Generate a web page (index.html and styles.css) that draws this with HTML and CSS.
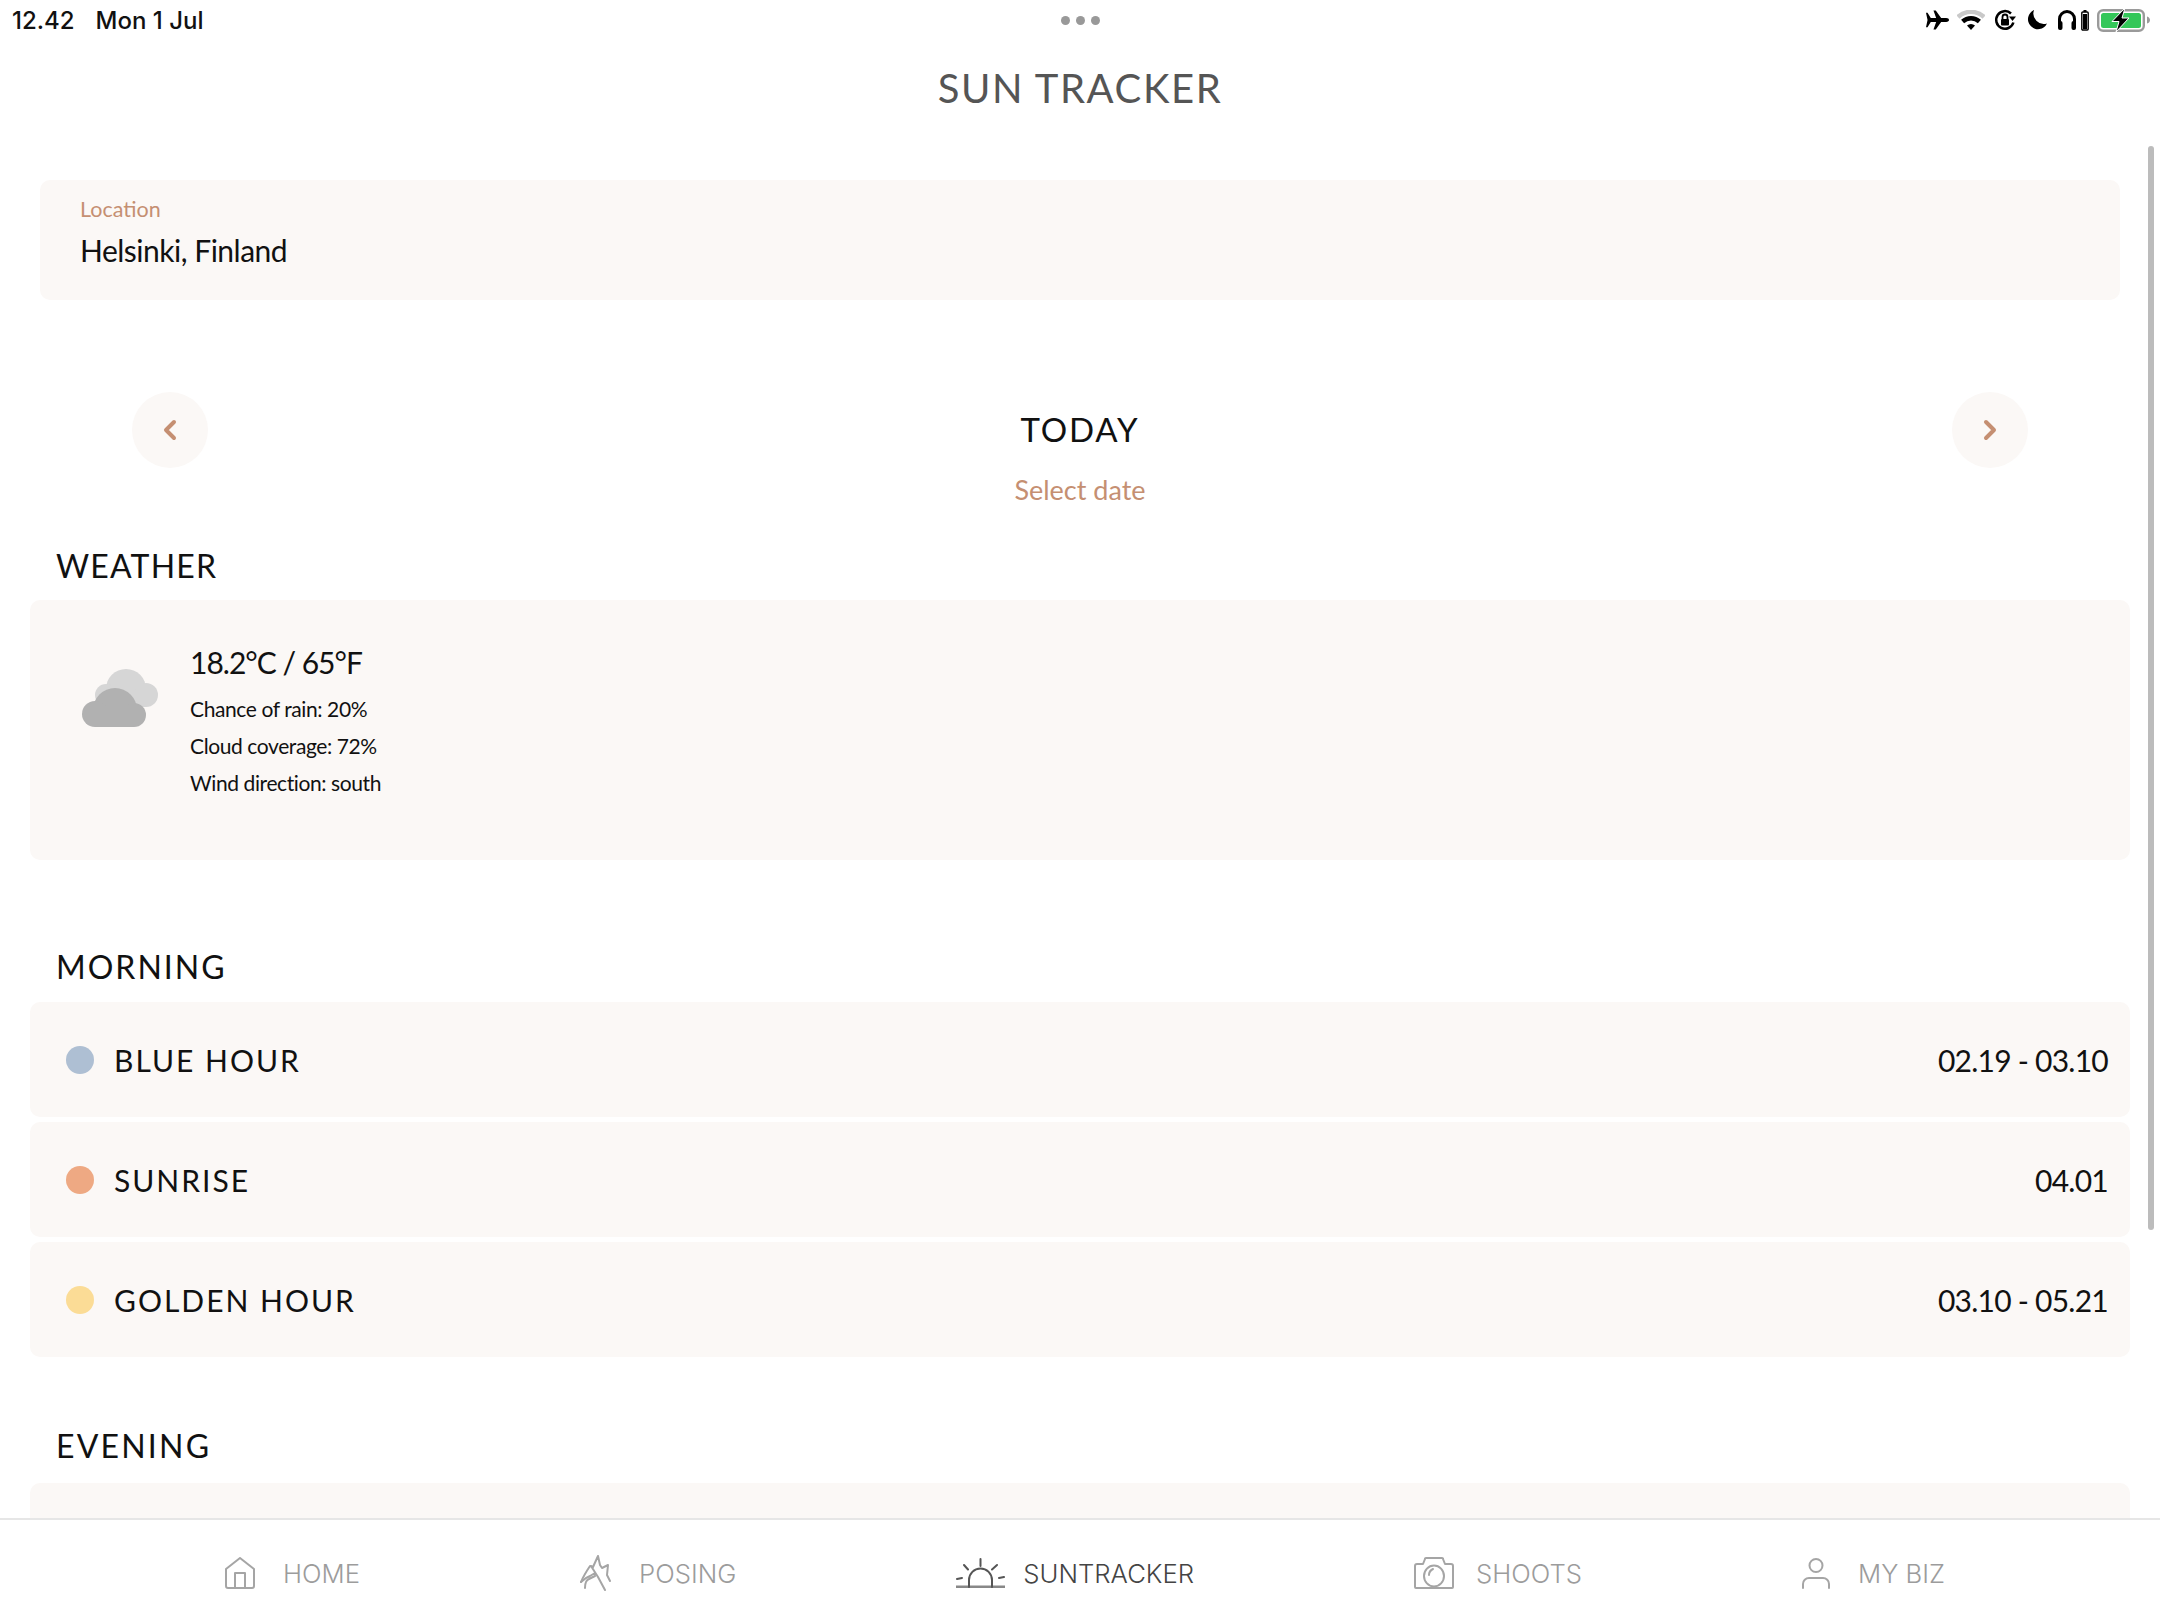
FILE: index.html
```html
<!DOCTYPE html>
<html lang="en">
<head>
<meta charset="utf-8">
<title>Sun Tracker</title>
<link rel="stylesheet" href="styles.css">
</head>
<body>
<div class="screen">
  <header class="status">
    <div class="status-time"><span>12.42</span><span>Mon 1 Jul</span></div>
    <div class="status-dots"><i></i><i></i><i></i></div>
    <div class="status-icons">
      <svg class="si-plane" viewBox="0 0 24 20"><path d="M0 2.500h1.600L5 8h5.600L7.800 0h2.400l5.600 8H21c2 0 3 1 3 2s-1 2-3 2h-5.200l-5.600 8H7.800l2.800-8H5l-3.400 5.500H0L1.600 10z"/></svg>
      <svg class="si-wifi" viewBox="0 0 28 20"><path d="M1 7a19 19 0 0 1 26 0" class="wifi-dim"/><path d="M5.600 11.500a12.500 12.500 0 0 1 16.800 0" class="wifi-on"/><path d="M14 20l-4-4.500a6 6 0 0 1 8 0z"/></svg>
      <svg class="si-lock" viewBox="0 0 22 22"><path d="M19.400 13.500A8.800 8.800 0 1 1 17 4.500" class="ring"/><path d="M15 7.500h7L18.500 12z"/><rect x="7" y="10" width="8" height="6.500" rx="1"/><path d="M8.500 10.500V8a2.500 2.500 0 0 1 5 0v2.500" class="shackle"/></svg>
      <svg class="si-moon" viewBox="0 0 20 20"><path d="M7 0a10 10 0 1 0 13 13.500A10.500 10.500 0 0 1 7 0z"/></svg>
      <svg class="si-phones" viewBox="0 0 18 20"><path d="M1.500 17V9a7.500 7.500 0 0 1 15 0v8" class="ring-thick"/><rect x="0" y="11" width="4.500" height="9" rx="2"/><rect x="13.500" y="11" width="4.500" height="9" rx="2"/></svg>
      <svg class="si-minibat" viewBox="0 0 8 21"><rect x="2.500" y="0" width="3" height="2"/><rect x="0.800" y="2" width="6.400" height="18" rx="1" class="minibat-frame"/><rect x="2" y="4" width="4" height="15"/></svg>
      <svg class="si-battery" viewBox="0 0 53 24"><rect x="1.200" y="2.200" width="45.600" height="20.600" rx="5" class="bat-frame"/><rect x="4" y="5" width="40" height="15" rx="2.500" class="bat-fill"/><path d="M50 8.500c2 .6 3 2 3 3.500s-1 3-3 3.500z" class="bat-tip"/><path d="M28 0L15 13.500h7L19 24l13-14h-7l3-10z" class="bat-bolt"/></svg>
    </div>
  </header>
  <h1 class="title">SUN TRACKER</h1>
  <main class="content">
    <section class="location card">
      <div class="location-label">Location</div>
      <div class="location-value">Helsinki, Finland</div>
    </section>
    <nav class="date-nav">
      <button class="round-btn" type="button"><svg viewBox="0 0 14 22"><path d="M11 3L3 11l8 8"/></svg></button>
      <div class="date-center">
        <div class="date-today">TODAY</div>
        <div class="date-select">Select date</div>
      </div>
      <button class="round-btn" type="button"><svg viewBox="0 0 14 22"><path d="M3 3l8 8-8 8"/></svg></button>
    </nav>
    <h2 class="section-title section-weather">WEATHER</h2>
    <section class="weather card">
      <svg class="cloud" viewBox="0 0 76 58">
        <g class="cloud-back"><circle cx="44" cy="20" r="20"/><circle cx="64" cy="26" r="12"/><circle cx="24" cy="26" r="11"/><rect x="24" y="22" width="40" height="16"/></g>
        <g class="cloud-front"><circle cx="33" cy="41" r="22"/><circle cx="13" cy="45" r="13"/><circle cx="52" cy="46" r="12"/><rect x="13" y="40" width="39" height="18"/></g>
      </svg>
      <div class="weather-text">
        <div class="weather-temp">18.2°C / 65°F</div>
        <div class="weather-line">Chance of rain: 20%</div>
        <div class="weather-line">Cloud coverage: 72%</div>
        <div class="weather-line">Wind direction: south</div>
      </div>
    </section>
    <h2 class="section-title section-morning">MORNING</h2>
    <section class="rows">
      <div class="row card"><span class="dot dot-blue"></span><span class="row-name">BLUE HOUR</span><span class="row-time">02.19 - 03.10</span></div>
      <div class="row card"><span class="dot dot-sun"></span><span class="row-name">SUNRISE</span><span class="row-time">04.01</span></div>
      <div class="row card"><span class="dot dot-gold"></span><span class="row-name">GOLDEN HOUR</span><span class="row-time">03.10 - 05.21</span></div>
    </section>
    <h2 class="section-title section-evening">EVENING</h2>
    <section class="rows"><div class="row card"></div></section>
  </main>
  <footer class="tabs">
    <a class="tab"><svg class="tab-icon ti-home" viewBox="0 0 30 32"><path d="M1 12L15 1l14 11v17a2 2 0 0 1-2 2H3a2 2 0 0 1-2-2z"/><path d="M10 31V16h10v15"/></svg>HOME</a>
    <a class="tab"><svg class="tab-icon ti-pose" viewBox="0 0 31 36"><path d="M1 27c2-5 5-10 9-16l3 1 5-11 2 9 2 3 6-3-1 10 3 6"/><path d="M25 35l-7-13-7-11M5 33c0-5 1-8 4-9l6-3M1 27c3-3 6-5 9-6l5-3"/></svg>POSING</a>
    <a class="tab tab-active"><svg class="tab-icon ti-sun" viewBox="0 0 49 30"><path d="M0 29h49" class="sun-base"/><path d="M13 29v-7a11.500 11.500 0 0 1 23 0v7"/><path d="M24.500 1v7M8 7l4 4.500M41 7l-5 4.500M1 21l5-1M43 20l5-1"/></svg>SUNTRACKER</a>
    <a class="tab tab-cam"><svg class="tab-icon ti-cam" viewBox="0 0 40 32"><path d="M1 9a2 2 0 0 1 2-2h6l2-5a1 1 0 0 1 1-1h16a1 1 0 0 1 1 1l2 5h6a2 2 0 0 1 2 2v21a1 1 0 0 1-1 1H2a1 1 0 0 1-1-1z"/><ellipse cx="20" cy="19" rx="10" ry="10.500"/><path d="M15 18c0-3 2-5 4-6"/></svg>SHOOTS</a>
    <a class="tab"><svg class="tab-icon ti-user" viewBox="0 0 28 31"><circle cx="14" cy="7.500" r="6.500"/><path d="M1 30v-4a6 6 0 0 1 6-6h14a6 6 0 0 1 6 6v4"/></svg>MY BIZ</a>
  </footer>
  <div class="scrollbar"></div>
</div>
</body>
</html>
```
FILE: styles.css
```css
* { box-sizing: border-box; }
html, body { margin: 0; padding: 0; }
body { background: #fff; font-family: "Lato", "Liberation Sans", sans-serif; color: #111; }
.screen { position: relative; width: 2160px; height: 1620px; display: flex; flex-direction: column; overflow: hidden; background: #fff; }

.status { height: 40px; flex: none; display: grid; grid-template-columns: 1fr auto 1fr; align-items: center; padding: 0 12px; }
.status-time { display: flex; gap: 21px; font-family: "Inter", sans-serif; font-size: 24px; font-weight: 500; color: #111; }
.status-dots { display: flex; gap: 6px; }
.status-dots i { display: block; width: 9px; height: 9px; border-radius: 50%; background: #999; }
.status-icons { display: flex; justify-content: flex-end; align-items: center; margin-right: -2px; }
.status-icons svg { display: block; fill: #000; flex: none; }
.si-plane { width: 23px; height: 20px; margin-right: 8px; }
.si-wifi { width: 28px; height: 20px; margin-right: 9px; }
.si-lock { width: 22px; height: 22px; margin-right: 11px; }
.si-moon { width: 20px; height: 20px; margin-right: 11px; }
.si-phones { width: 18px; height: 20px; margin-right: 5px; }
.si-minibat { width: 8px; height: 21px; margin-right: 8px; }
.si-battery { width: 53px; height: 24px; }
.wifi-dim, .wifi-on { fill: none; stroke-width: 4.5; }
.wifi-dim { stroke: #c9c9c9; }
.wifi-on { stroke: #000; }
.ring { fill: none; stroke: #000; stroke-width: 2.5; }
.shackle { fill: none; stroke: #000; stroke-width: 1.8; }
.ring-thick { fill: none; stroke: #000; stroke-width: 3; }
.minibat-frame { fill: none; stroke: #000; stroke-width: 1.4; }
.bat-frame { fill: none; stroke: #9a9a9a; stroke-width: 2.400; }
.bat-fill { fill: #34c759; }
.bat-tip { fill: #9a9a9a; }
.bat-bolt { fill: #000; stroke: #fff; stroke-width: 1; }

.title { flex: none; margin: 0; height: 98px; line-height: 96px; text-align: center; font-size: 40px; font-weight: 400; letter-spacing: 1.6px; color: #555; font-family: "Lato", sans-serif; }

.content { flex: 1; min-height: 0; overflow: hidden; padding: 42px 30px 0; }
.card { background: #fbf8f6; border-radius: 10px; }
.location { margin: 0 10px; height: 120px; padding: 14px 40px 0; }
.location-label { font-size: 21.500px; line-height: 30px; color: #c58f72; font-weight: 400; }
.location-value { font-size: 30px; line-height: 42px; margin-top: 5px; font-weight: 400; letter-spacing: -0.5px; color: #111; }

.date-nav { display: flex; justify-content: space-between; align-items: flex-start; margin-top: 92px; padding: 0 102px; }
.round-btn { flex: none; width: 76px; height: 76px; padding: 0; border: 0; border-radius: 50%; background: #fbf8f6; display: flex; align-items: center; justify-content: center; }
.round-btn svg { width: 14px; height: 22px; fill: none; stroke: #c58f72; stroke-width: 4; stroke-linecap: round; stroke-linejoin: round; }
.date-center { text-align: center; }
.date-today { font-size: 33px; line-height: 74px; letter-spacing: 1.800px; color: #111; }
.date-select { font-size: 27px; line-height: 46px; margin-top: 1px; color: #c58f72; }

.section-title { margin: 0; padding-left: 26px; font-size: 32px; line-height: 40px; font-weight: 400; color: #111; }
.section-weather { margin-top: 33px; margin-bottom: 14px; letter-spacing: 1.200px; }
.section-morning { margin-top: 87px; margin-bottom: 15px; letter-spacing: 2px; }
.section-evening { margin-top: 69px; margin-bottom: 17px; letter-spacing: 2.200px; }

.weather { height: 260px; display: flex; align-items: flex-start; padding: 69px 0 0 52px; }
.cloud { display: block; flex: none; width: 76px; height: 58px; margin-right: 32px; }
.cloud-back { fill: #d6d6d6; }
.cloud-front { fill: #b1b1b1; }
.weather-text { margin-top: -29px; }
.weather-temp { font-size: 30px; line-height: 44px; letter-spacing: -1px; color: #111; }
.weather-line { font-size: 21px; line-height: 37px; letter-spacing: -0.4px; color: #111; }
.weather-temp + .weather-line { margin-top: 6px; }

.rows { display: flex; flex-direction: column; gap: 5px; }
.row { height: 115px; display: flex; align-items: center; padding: 0 22px 0 36px; }
.dot { flex: none; width: 28px; height: 28px; border-radius: 50%; margin-right: 20px; }
.dot-blue { background: #aebfd3; }
.dot-sun { background: #eea983; }
.dot-gold { background: #fbdc96; }
.row-name { flex: 1; font-size: 30px; letter-spacing: 2px; color: #111; }
.row-time { font-size: 30px; letter-spacing: -0.750px; color: #111; }

.tabs { flex: none; height: 102px; padding-top: 6px; background: #fff; border-top: 2px solid #e6e6e6; display: flex; justify-content: space-evenly; align-items: center; }
.tab { display: flex; align-items: center; gap: 28px; margin: 0 -5px 0 5px; font-family: "Inter", sans-serif; font-size: 25.700px; font-weight: 300; color: #9c9c9c; }
.tab-active { color: #444; gap: 18px; }
.tab-cam { gap: 22px; }
.tab-icon { display: block; flex: none; fill: none; stroke: #a5a5a5; stroke-width: 2; stroke-linejoin: round; stroke-linecap: round; }
.ti-home { width: 30px; height: 32px; }
.ti-pose { width: 31px; height: 36px; }
.ti-sun { width: 49px; height: 30px; stroke: #555; }
.sun-base { stroke: #888; stroke-width: 3; }
.ti-cam { width: 40px; height: 32px; }
.ti-user { width: 28px; height: 31px; }

.scrollbar { position: absolute; left: 2148px; top: 146px; width: 6px; height: 1084px; border-radius: 3px; background: #bcbcbc; }
```
